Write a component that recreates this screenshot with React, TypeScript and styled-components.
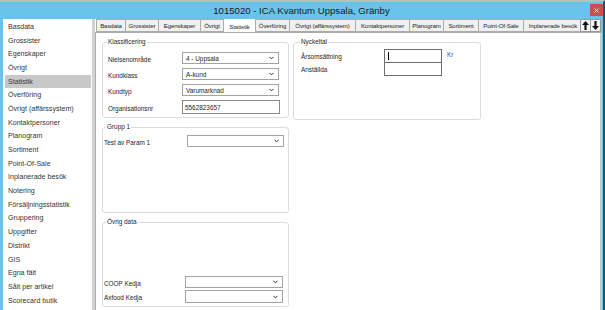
import React from "react";
import styled, { createGlobalStyle } from "styled-components";

const GlobalStyle = createGlobalStyle`
  html, body {
    margin: 0;
    padding: 0;
    background: #34505c;
  }
  * {
    box-sizing: border-box;
  }
`;

const Window = styled.div`
  width: 605px;
  height: 310px;
  overflow: hidden;
  display: flex;
  flex-direction: column;
  background: #67c4ea;
  border-top: 2px solid #bcbcbc;
  border-right: 2px solid #34505c;
  font-family: "Liberation Sans", Arial, sans-serif;
  color: #1e1e1e;
`;

const TitleBar = styled.div`
  height: 17px;
  flex: none;
  display: grid;
  grid-template-columns: 1fr auto 1fr;
  align-items: center;
`;

const Title = styled.div`
  grid-column: 2;
  font-size: 9.6px;
  line-height: 12px;
  color: #1a1a1a;
  margin-top: 1px;
`;

const CloseButton = styled.div`
  grid-column: 3;
  justify-self: end;
  align-self: start;
  margin-top: 2px;
  width: 13px;
  height: 12px;
  background: #c9514d;
  display: flex;
  align-items: center;
  justify-content: center;
`;

const Client = styled.div`
  flex: 1;
  min-height: 0;
  display: flex;
  padding-left: 3px;
  padding-right: 1px;
`;

const Sidebar = styled.div`
  width: 92px;
  flex: none;
  background: #fff;
  border-right: 3px solid #d2d2d2;
  padding-top: 1px;
  display: flex;
  flex-direction: column;
`;

const SideItem = styled.div<{ $active?: boolean }>`
  height: 13.7px;
  display: flex;
  align-items: center;
  margin: 0 1px 0 2px;
  padding-left: 3px;
  font-size: 7.1px;
  color: #353535;
  white-space: nowrap;
  background: ${(p) => (p.$active ? "#c8c8c8" : "transparent")};
`;

const Main = styled.div`
  flex: 1;
  min-width: 0;
  display: flex;
  flex-direction: column;
`;

const TabStrip = styled.div`
  height: 14px;
  flex: none;
  display: flex;
  background: #fff;
`;

const Tabs = styled.div`
  flex: 1;
  min-width: 0;
  display: flex;
  align-items: flex-end;
  overflow: hidden;
  padding-left: 1px;
  border-bottom: 1px solid #acacac;
`;

const Tab = styled.div<{ $w: number; $active?: boolean }>`
  flex: none;
  width: ${(p) => p.$w}px;
  height: ${(p) => (p.$active ? 15 : 13)}px;
  margin-bottom: ${(p) => (p.$active ? -1 : 0)}px;
  margin-right: -1px;
  border: 1px solid #acacac;
  border-bottom: ${(p) => (p.$active ? "none" : "1px solid #acacac")};
  background: ${(p) => (p.$active ? "#fff" : "#f0f0f0")};
  position: relative;
  z-index: ${(p) => (p.$active ? 1 : 0)};
  display: flex;
  align-items: center;
  justify-content: center;
  font-size: 6.1px;
  letter-spacing: -0.1px;
  color: #1e1e1e;
  white-space: nowrap;
  overflow: hidden;
`;

const ScrollButtons = styled.div`
  width: 22px;
  flex: none;
  display: flex;
  align-items: flex-end;
  border-bottom: 1px solid #acacac;
  background: #67c4ea;
`;

const ScrollButton = styled.div`
  width: 11px;
  height: 13px;
  background: #f4f4f4;
  border: 1px solid #9a9a9a;
  margin-right: -1px;
  display: flex;
  align-items: center;
  justify-content: center;
`;

const Panel = styled.div`
  flex: 1;
  min-height: 0;
  background: #fff;
  border-left: 1px solid #acacac;
  border-right: 2px solid #cacaca;
  padding: 9px 0 0 6px;
  display: flex;
  align-items: flex-start;
  gap: 4px;
`;

const Column = styled.div`
  display: flex;
  flex-direction: column;
  gap: 9px;
`;

const GroupBox = styled.div<{ $w: number; $h: number; $pt: number; $pl: number; $end?: boolean }>`
  position: relative;
  width: ${(p) => p.$w}px;
  height: ${(p) => p.$h}px;
  border: 1px solid #dcdcdc;
  border-radius: 3px;
  padding: ${(p) => p.$pt}px 0 3px ${(p) => p.$pl}px;
  display: flex;
  flex-direction: column;
  justify-content: ${(p) => (p.$end ? "flex-end" : "flex-start")};
`;

const Legend = styled.span<{ $x: number }>`
  position: absolute;
  top: -5px;
  left: ${(p) => p.$x}px;
  padding: 0 1px;
  background: #fff;
  font-size: 6.4px;
  line-height: 8px;
  color: #1e1e1e;
`;

const Row = styled.div<{ $label: number; $gap: number }>`
  display: grid;
  grid-template-columns: ${(p) => p.$label}px auto;
  align-items: center;
  margin-bottom: ${(p) => p.$gap}px;
  &:last-child {
    margin-bottom: 0;
  }
`;

const Label = styled.span`
  font-size: 6.4px;
  color: #1e1e1e;
  white-space: nowrap;
  padding-top: 2px;
`;

const Select = styled.div<{ $w: number; $h?: number }>`
  width: ${(p) => p.$w}px;
  height: ${(p) => p.$h ?? 12}px;
  border: 1px solid #a3a3a3;
  background: #fff;
  display: flex;
  align-items: center;
  justify-content: space-between;
  padding: 0 4px 0 3px;
  font-size: 6.4px;
  color: #1e1e1e;
`;

const TextInput = styled.div<{ $w: number; $h: number; $dark?: boolean }>`
  width: ${(p) => p.$w}px;
  height: ${(p) => p.$h}px;
  border: 1px solid ${(p) => (p.$dark ? "#6e6e6e" : "#8a8a8a")};
  background: #fff;
  display: flex;
  align-items: center;
  padding-left: 2px;
  font-size: 6.4px;
  color: #1e1e1e;
`;

const Caret = styled.span`
  width: 1px;
  height: 8px;
  background: #000;
  margin-left: 1px;
`;

const KeyRow = styled.div<{ $overlap?: boolean }>`
  display: grid;
  grid-template-columns: 83px 58px auto;
  align-items: start;
  margin-top: ${(p) => (p.$overlap ? -1 : 0)}px;
`;

const KeyLabel = styled.span`
  font-size: 6.4px;
  color: #1e1e1e;
  padding-top: 4px;
`;

const Unit = styled.span`
  font-size: 6.4px;
  color: #2b45d6;
  margin-left: 5px;
  margin-top: 2px;
`;

const Chevron = () => (
  <svg width="5" height="4" viewBox="0 0 5 4">
    <polyline points="0.5,0.8 2.5,2.9 4.5,0.8" fill="none" stroke="#333" strokeWidth="1" />
  </svg>
);

const Arrow = ({ down }: { down?: boolean }) => (
  <svg width="7" height="9" viewBox="0 0 7 9" style={down ? { transform: "rotate(180deg)" } : undefined}>
    <polygon points="3.5,0 7,4 4.6,4 4.6,9 2.4,9 2.4,4 0,4" fill="#111" />
  </svg>
);

const sideItems = [
  "Basdata",
  "Grossister",
  "Egenskaper",
  "Övrigt",
  "Statistik",
  "Överföring",
  "Övrigt (affärssystem)",
  "Kontaktpersoner",
  "Planogram",
  "Sortiment",
  "Point-Of-Sale",
  "Inplanerade besök",
  "Notering",
  "Försäljningsstatistik",
  "Gruppering",
  "Uppgifter",
  "Distrikt",
  "GIS",
  "Egna fält",
  "Sålt per artikel",
  "Scorecard butik",
];

const tabs: [string, number][] = [
  ["Basdata", 30],
  ["Grossister", 34],
  ["Egenskaper", 43],
  ["Övrigt", 24],
  ["Statistik", 33],
  ["Överföring", 35],
  ["Övrigt (affärssystem)", 67],
  ["Kontaktpersoner", 55],
  ["Planogram", 35],
  ["Sortiment", 36],
  ["Point-Of-Sale", 46],
  ["Inplanerade besök", 60],
];

const App: React.FC = () => {
  return (
    <>
      <GlobalStyle />
      <Window>
        <TitleBar>
          <Title>1015020 - ICA Kvantum Uppsala, Gränby</Title>
          <CloseButton>
            <svg width="5" height="5" viewBox="0 0 5 5">
              <path d="M0.5 0.5 L4.5 4.5 M4.5 0.5 L0.5 4.5" stroke="#f3d6d4" strokeWidth="1" />
            </svg>
          </CloseButton>
        </TitleBar>
        <Client>
          <Sidebar>
            {sideItems.map((item) => (
              <SideItem key={item} $active={item === "Statistik"}>
                {item}
              </SideItem>
            ))}
          </Sidebar>
          <Main>
            <TabStrip>
              <Tabs>
                {tabs.map(([name, w]) => (
                  <Tab key={name} $w={w} $active={name === "Statistik"}>
                    {name}
                  </Tab>
                ))}
              </Tabs>
              <ScrollButtons>
                <ScrollButton>
                  <Arrow />
                </ScrollButton>
                <ScrollButton>
                  <Arrow down />
                </ScrollButton>
              </ScrollButtons>
            </TabStrip>
            <Panel>
              <Column>
                <GroupBox $w={187} $h={76} $pt={9} $pl={5}>
                  <Legend $x={4}>Klassificering</Legend>
                  <Row $label={74} $gap={4}>
                    <Label>Nielsenområde</Label>
                    <Select $w={97}>
                      4 - Uppsala
                      <Chevron />
                    </Select>
                  </Row>
                  <Row $label={74} $gap={4}>
                    <Label>Kundklass</Label>
                    <Select $w={97}>
                      A-kund
                      <Chevron />
                    </Select>
                  </Row>
                  <Row $label={74} $gap={4}>
                    <Label>Kundtyp</Label>
                    <Select $w={97}>
                      Varumarknad
                      <Chevron />
                    </Select>
                  </Row>
                  <Row $label={74} $gap={4}>
                    <Label>Organisationsnr</Label>
                    <TextInput $w={98} $h={14}>
                      5562823657
                    </TextInput>
                  </Row>
                </GroupBox>
                <GroupBox $w={187} $h={86} $pt={7} $pl={1}>
                  <Legend $x={3}>Grupp 1</Legend>
                  <Row $label={83} $gap={0}>
                    <Label>Test av Param 1</Label>
                    <Select $w={97}>
                      <span />
                      <Chevron />
                    </Select>
                  </Row>
                </GroupBox>
                <GroupBox $w={187} $h={85} $pt={0} $pl={1} $end>
                  <Legend $x={3}>Övrig data</Legend>
                  <Row $label={81} $gap={2}>
                    <Label>COOP Kedja</Label>
                    <Select $w={98}>
                      <span />
                      <Chevron />
                    </Select>
                  </Row>
                  <Row $label={81} $gap={0}>
                    <Label>Axfood Kedja</Label>
                    <Select $w={98} $h={13}>
                      <span />
                      <Chevron />
                    </Select>
                  </Row>
                </GroupBox>
              </Column>
              <Column>
                <GroupBox $w={188} $h={78} $pt={6} $pl={7}>
                  <Legend $x={6}>Nyckeltal</Legend>
                  <KeyRow>
                    <KeyLabel>Årsomsättning</KeyLabel>
                    <TextInput $w={58} $h={14} $dark>
                      <Caret />
                    </TextInput>
                    <Unit>Kr</Unit>
                  </KeyRow>
                  <KeyRow $overlap>
                    <KeyLabel>Anställda</KeyLabel>
                    <TextInput $w={58} $h={14} $dark />
                  </KeyRow>
                </GroupBox>
              </Column>
            </Panel>
          </Main>
        </Client>
      </Window>
    </>
  );
};

export default App;
